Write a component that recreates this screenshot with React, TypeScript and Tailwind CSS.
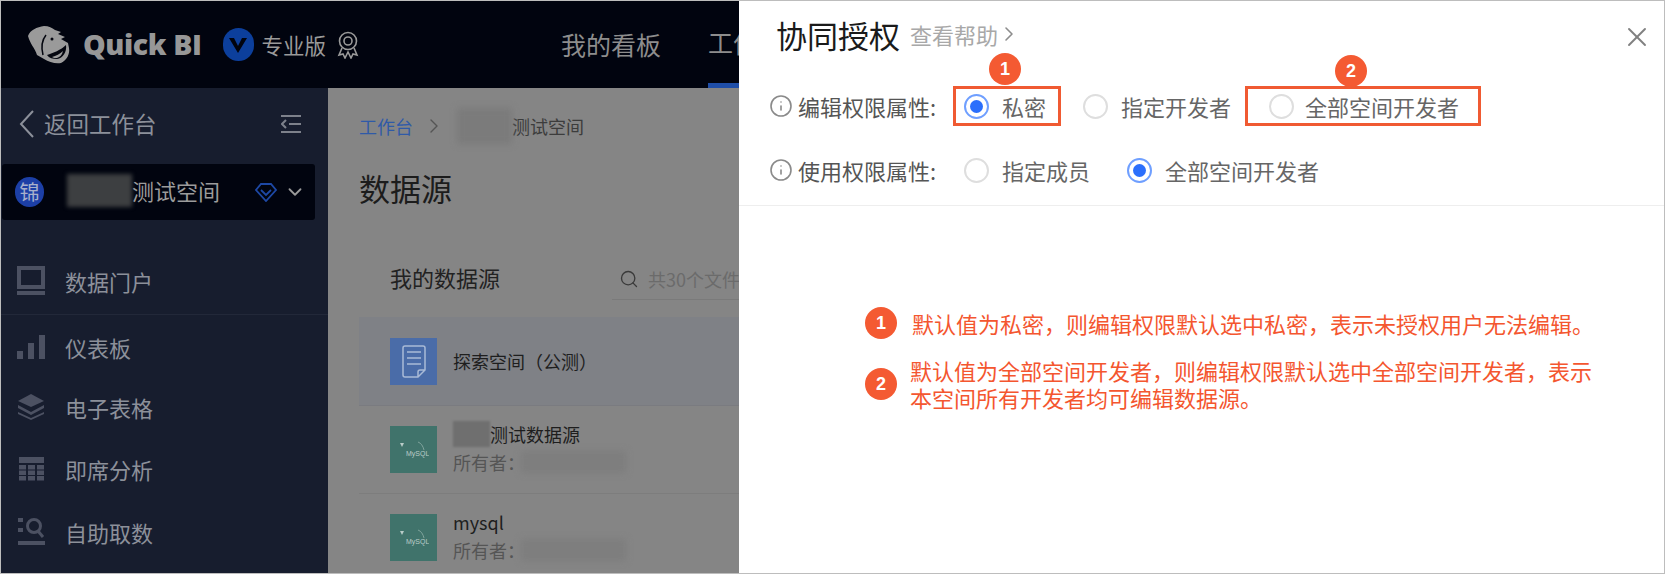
import React from 'react';
import { ChevronRight, ChevronDown, Search, Info, X } from 'lucide-react';

const FONT = "font-['Noto_Sans_CJK_SC','Noto_Sans',sans-serif]";

function Logo() {
  return (
    <svg width="44" height="38" viewBox="0 0 44 38" className="shrink-0">
      <path d="M1 10C3 4 10 1 17 0c5 0 8 2 11 4l6 2-3 2 7 3-4 2 7 4 1 5c1 6-2 12-8 15-6 1-12-1-17-4l-7-4C8 22 3 18 1 10z" fill="#9a9a9a" />
      <path d="M20 29c6-2 14-5 19-10 1 7-3 13-9 14-4 0-8-1-10-4z" fill="#04060f" />
      <path d="M25 31c4-1 8-3 11-6-1 4-3 6-6 7-2 0-4 0-5-1z" fill="#9a9a9a" />
      <path d="M19 9c-4 5-5 12-3 20" stroke="#04060f" strokeWidth="1.5" fill="none" />
      <circle cx="25" cy="13" r="1.5" fill="#04060f" />
    </svg>
  );
}

function Medal() {
  return (
    <svg width="22" height="28" viewBox="0 0 22 28" fill="none" stroke="#9a9a9a" strokeWidth="1.6" className="shrink-0">
      <circle cx="11" cy="10" r="8.5" />
      <circle cx="11" cy="10" r="4" />
      <path d="M5 17l-3 7 4-1 2 4 3-6 3 6 2-4 4 1-3-7" />
    </svg>
  );
}

function MenuItem({ icon, label, h }: { icon: React.ReactNode; label: string; h: string }) {
  return (
    <div className={`flex items-center pl-4 ${h}`}>
      <div className="w-[28px] flex justify-center">{icon}</div>
      <span className="ml-[20px] text-[22px] leading-none text-[#8c909a]">{label}</span>
    </div>
  );
}

const ICON = '#4c5162';

const portalIcon = (
  <svg width="28" height="30" viewBox="0 0 28 30" fill="none">
    <rect x="2" y="2" width="24" height="19" stroke={ICON} strokeWidth="4" />
    <rect x="0" y="25" width="28" height="4" fill={ICON} />
  </svg>
);
const barsIcon = (
  <svg width="28" height="24" viewBox="0 0 28 24" fill={ICON}>
    <rect x="0" y="16" width="6" height="8" />
    <rect x="11" y="8" width="6" height="16" />
    <rect x="22" y="0" width="6" height="24" />
  </svg>
);
const layersIcon = (
  <svg width="28" height="26" viewBox="0 0 28 26" fill={ICON}>
    <path d="M14 0l13 7-13 6L1 7z" />
    <path d="M1 11l13 7 13-7v3l-13 7-13-7z" />
    <path d="M1 18l13 6 13-6v2l-13 6-13-6z" />
  </svg>
);
const gridIcon = (
  <svg width="25" height="24" viewBox="0 0 25 24" fill={ICON}>
    <rect x="0" y="0" width="25" height="6" />
    {[8, 13.5, 19].map(y =>
      [0, 9, 18].map(x => <rect key={`${x}-${y}`} x={x} y={y} width="7" height="4.5" />)
    )}
  </svg>
);
const fetchIcon = (
  <svg width="27" height="29" viewBox="0 0 27 29" fill="none">
    <rect x="0" y="1" width="5" height="4" fill={ICON} />
    <rect x="0" y="11" width="5" height="4" fill={ICON} />
    <rect x="0" y="24" width="27" height="4" fill={ICON} />
    <circle cx="16" cy="9" r="6.5" stroke={ICON} strokeWidth="3" />
    <path d="M20 14l5 6" stroke={ICON} strokeWidth="3" />
  </svg>
);

function MysqlTile() {
  return (
    <div className="w-[47px] h-[47px] shrink-0 bg-[#40736b] flex items-center justify-center relative">
      <svg width="30" height="20" viewBox="0 0 30 20" fill="none" className="mt-[1px]">
        <path d="M1 3h4L3 7z" fill="#b9ccc8" />
        <path d="M19 2c3 1 5 4 6 8" stroke="#7fa39c" strokeWidth="1" />
        <text x="7" y="16" fontSize="7" fill="#b9ccc8" fontFamily="Liberation Sans">MySQL</text>
      </svg>
    </div>
  );
}

function SourceRow({ title, blurTitle }: { title: string; blurTitle?: boolean }) {
  return (
    <div className="h-[88px] border-b border-[#7d7d7d] flex items-center pl-[31px]">
      <MysqlTile />
      <div className="ml-4 flex flex-col gap-[4px] -mt-[3px]">
        <div className="flex items-center h-[24px] text-[18px] leading-none text-[#1e1e1e]">
          {blurTitle && <span className="w-[37px] h-[26px] bg-[#6f6f6f] blur-[1px]" />}
          {title}
        </div>
        <div className="flex items-center h-[24px] text-[18px] leading-none text-[#555]">
          所有者：
          <span className="w-[105px] h-[22px] ml-[-4px] bg-[#7e7e7e] blur-[3px]" />
        </div>
      </div>
    </div>
  );
}

function Radio({ on }: { on?: boolean }) {
  return (
    <span
      className={`w-[25px] h-[25px] shrink-0 rounded-full border-2 flex items-center justify-center ${
        on ? 'border-[#6f9fff]' : 'border-[#dedede]'
      }`}
    >
      {on && <span className="w-[13px] h-[13px] rounded-full bg-[#2b6ffc]" />}
    </span>
  );
}

function Badge({ n, className }: { n: number; className?: string }) {
  return (
    <span
      className={`w-[32px] h-[32px] rounded-full bg-[#f45a32] text-white text-[18px] font-bold leading-none flex items-center justify-center font-['Liberation_Sans',sans-serif] ${className ?? ''}`}
    >
      {n}
    </span>
  );
}

function FieldLabel({ children }: { children: string }) {
  return (
    <div className="flex items-center w-[165px] shrink-0 -ml-[1px]">
      <Info size={24} strokeWidth={1.6} className="text-[#8a8a8a] shrink-0" />
      <span className="ml-[5px] text-[22px] leading-none text-[#555] whitespace-nowrap">{children}</span>
    </div>
  );
}

export default function App() {
  return (
    <div className={`w-[1665px] h-[574px] box-border border border-[#bdbdbd] flex overflow-hidden bg-white ${FONT}`}>
      {/* masked page */}
      <div className="w-[738px] shrink-0 flex flex-col overflow-hidden">
        <header className="h-[87px] shrink-0 bg-[#01040f] flex items-center pl-[26px] whitespace-nowrap">
          <Logo />
          <span className="ml-[12px] shrink-0 text-[28.5px] font-extrabold leading-none text-[#979797] font-['Open_Sans',sans-serif] tracking-[-0.4px]">Quick BI</span>
          <span className="ml-[21px] shrink-0 w-[31px] h-[33px] rounded-full bg-[#0c3f9c] flex items-center justify-center">
            <svg width="20" height="16" viewBox="0 0 20 16">
              <path d="M1 1h5l4 8 4-8h5l-9 15z" fill="#01040f" />
            </svg>
          </span>
          <span className="ml-[8px] shrink-0 text-[21.5px] leading-none text-[#9a9a9a]">专业版</span>
          <span className="ml-[11px] shrink-0"><Medal /></span>
          <span className="ml-[202px] shrink-0 text-[25px] leading-none text-[#8d8d8d]">我的看板</span>
          <div className="ml-[47px] h-full flex flex-col w-[31px] overflow-hidden shrink-0">
            <div className="flex-1 flex items-center text-[25px] leading-none text-[#8d8d8d]">工作台</div>
            <div className="h-[5px] bg-[#1f4ea8]" />
          </div>
        </header>

        <div className="flex-1 flex min-h-0">
          <aside className="w-[327px] shrink-0 bg-[#171d2e] flex flex-col">
            <div className="h-[76px] shrink-0 flex items-center pl-[18px] pr-[27px] pb-[5px]">
              <svg width="16" height="28" viewBox="0 0 16 28" fill="none" stroke="#8c909a" strokeWidth="2" className="shrink-0">
                <path d="M14 1L2 14l12 13" />
              </svg>
              <span className="ml-[9px] text-[22.5px] leading-none text-[#8c909a]">返回工作台</span>
              <svg width="20" height="20" viewBox="0 0 20 20" className="ml-auto" fill="none" stroke="#7d818b" strokeWidth="2">
                <path d="M0 2h20M8 10h12M0 18h20M5 6l-4 4 4 4" />
              </svg>
            </div>
            <div className="h-[56px] shrink-0 ml-[1px] w-[313px] rounded-[3px] bg-[#01040f] flex items-center pl-[13px]">
              <span className="w-[29px] h-[30px] rounded-full bg-[#1c3fa6] text-[#a8b1cc] text-[20px] leading-none flex items-center justify-center">锦</span>
              <span className="ml-[23px] w-[65px] h-[33px] bg-[#3d3f41] blur-[2px] -translate-y-[2px]" />
              <span className="text-[22px] leading-none text-[#9c9c9c] -translate-y-[2px]">测试空间</span>
              <svg width="22" height="20" viewBox="0 0 22 20" fill="none" stroke="#1d48a5" strokeWidth="1.8" className="ml-[35px]">
                <path d="M6 2h10l5 6-10 11L1 8zM6 8l5 5 5-5" />
              </svg>
              <ChevronDown size={22} strokeWidth={2} className="ml-[7px] text-[#9a9a9a]" />
            </div>
            <div className="mt-[28px] border-b border-[#222839]">
              <MenuItem icon={portalIcon} label="数据门户" h="h-[66px]" />
            </div>
            <div className="pt-[2px]">
              <MenuItem icon={barsIcon} label="仪表板" h="h-[60px]" />
              <MenuItem icon={layersIcon} label="电子表格" h="h-[60px]" />
              <MenuItem icon={gridIcon} label="即席分析" h="h-[63px]" />
              <MenuItem icon={fetchIcon} label="自助取数" h="h-[63px]" />
            </div>
          </aside>

          <main className="flex-1 min-w-0 bg-[#858585] flex flex-col">
            <div className="h-[76px] shrink-0 flex items-center pl-[31px] pb-[1px] text-[18px] leading-none whitespace-nowrap">
              <span className="text-[#2f5aa8]">工作台</span>
              <ChevronRight size={24} strokeWidth={1.4} className="ml-[9px] text-[#555]" />
              <span className="ml-[11px] w-[55px] h-[36px] bg-[#7b7b7b] blur-[3px]" />
              <span className="text-[#3c3c3c]">测试空间</span>
            </div>
            <div className="h-[50px] shrink-0 flex items-center pl-[31px] pb-[4px] text-[31px] leading-none text-[#1c1c1c]">数据源</div>
            <div className="mt-[44px] h-[42px] shrink-0 flex pl-[62px]">
              <span className="flex items-center pb-[4px] text-[22px] leading-none text-[#222] whitespace-nowrap">我的数据源</span>
              <div className="ml-[112px] flex-1 flex items-center border-b border-[#7a7a7a] pl-[7px] overflow-hidden">
                <Search size={20} strokeWidth={1.6} className="text-[#3a3a3a] shrink-0" />
                <span className="ml-[9px] text-[18px] leading-none text-[#6b6b6b] whitespace-nowrap">共30个文件</span>
              </div>
            </div>
            <div className="mt-[17px] ml-[31px]">
              <div className="h-[89px] bg-[#7f8186] border-b border-[#7a7b80] flex items-center">
                <div className="ml-[31px] w-[47px] h-[47px] bg-[#4a6ca8] flex items-center justify-center">
                  <svg width="24" height="33" viewBox="0 0 24 33" fill="none" stroke="#a9bad6" strokeWidth="1.5">
                    <path d="M3 1h18a2 2 0 0 1 2 2v22l-7 7H3a2 2 0 0 1-2-2V3a2 2 0 0 1 2-2zM5 7h14M5 13h14M5 19h14M16 32v-5a2 2 0 0 1 2-2h5" />
                  </svg>
                </div>
                <span className="ml-4 text-[18px] leading-none text-[#1e1e1e] whitespace-nowrap">探索空间（公测）</span>
              </div>
              <SourceRow title="测试数据源" blurTitle />
              <SourceRow title="mysql" />
            </div>
          </main>
        </div>
      </div>

      {/* authorisation panel */}
      <section className="flex-1 min-w-0 bg-white flex flex-col">
        <div className="h-[85px] shrink-0 pl-[37px] pr-[11px]">
          <div className="h-[66px] flex items-center w-full">
            <h1 className="text-[31px] leading-none text-[#1a1a1a] font-normal whitespace-nowrap">协同授权</h1>
            <span className="ml-[10px] text-[22px] leading-none text-[#a8a8a8] whitespace-nowrap">查看帮助</span>
            <ChevronRight size={24} strokeWidth={1.6} className="text-[#8d8d8d] -ml-[1px]" />
            <X size={32} strokeWidth={1.4} className="ml-auto mt-[6px] text-[#808080]" />
          </div>
        </div>

        <div className="h-[40px] shrink-0 flex items-center pl-[31px]">
          <FieldLabel>编辑权限属性:</FieldLabel>
          <div className="ml-[19px] w-[108px] h-[40px] border-[3px] border-[#f05a32] relative flex items-center pl-[8px] gap-[13px]">
            <Badge n={1} className="absolute -top-[36px] left-[33px]" />
            <Radio on />
            <span className="text-[22px] leading-none text-[#666] whitespace-nowrap">私密</span>
          </div>
          <div className="ml-[22px] flex items-center gap-[13px]">
            <Radio />
            <span className="text-[22px] leading-none text-[#666] whitespace-nowrap">指定开发者</span>
          </div>
          <div className="ml-[14px] w-[236px] h-[40px] border-[3px] border-[#f05a32] relative flex items-center pl-[21px] gap-[11px]">
            <Badge n={2} className="absolute -top-[34px] left-[87px]" />
            <Radio />
            <span className="text-[22px] leading-none text-[#666] whitespace-nowrap">全部空间开发者</span>
          </div>
        </div>

        <div className="mt-[24px] h-[40px] shrink-0 flex items-center pl-[31px]">
          <FieldLabel>使用权限属性:</FieldLabel>
          <div className="ml-[30px] flex items-center gap-[13px]">
            <Radio />
            <span className="text-[22px] leading-none text-[#666] whitespace-nowrap">指定成员</span>
          </div>
          <div className="ml-[37px] flex items-center gap-[13px]">
            <Radio on />
            <span className="text-[22px] leading-none text-[#666] whitespace-nowrap">全部空间开发者</span>
          </div>
        </div>

        <div className="mt-[15px] border-b border-[#eeeeee]" />

        <div className="pl-[126px] pt-[101px] text-[22px] leading-[27px] text-[#f4562f]">
          <div className="flex items-center gap-[15px]">
            <Badge n={1} className="shrink-0" />
            <p className="whitespace-nowrap">默认值为私密，则编辑权限默认选中私密，表示未授权用户无法编辑。</p>
          </div>
          <div className="mt-[18px] flex items-center gap-[13px]">
            <Badge n={2} className="shrink-0" />
            <p className="w-[684px]">默认值为全部空间开发者，则编辑权限默认选中全部空间开发者，表示本空间所有开发者均可编辑数据源。</p>
          </div>
        </div>
      </section>
    </div>
  );
}
